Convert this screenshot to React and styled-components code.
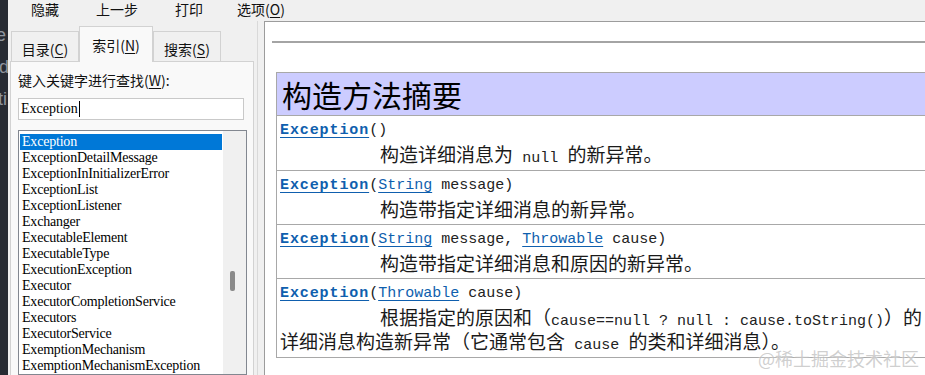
import React from "react";
import styled, { createGlobalStyle } from "styled-components";

const UI = `"Noto Sans CJK SC", "Noto Sans", sans-serif`;
const MONO = `"Liberation Mono", "DejaVu Sans Mono", monospace`;
const LIST = `"Liberation Serif", "Times New Roman", serif`;

const GlobalStyle = createGlobalStyle`
  html, body {
    margin: 0;
    padding: 0;
    overflow: hidden;
  }
  body {
    width: 925px;
    height: 375px;
    background: #f0f0f0;
  }
  * {
    box-sizing: border-box;
  }
`;

const Screen = styled.div`
  position: relative;
  display: flex;
  width: 925px;
  height: 375px;
  overflow: hidden;
  background: #f0f0f0;
`;

const Desktop = styled.div`
  flex: none;
  width: 8px;
  overflow: hidden;
  display: flex;
  flex-direction: column;
  gap: 12px;
  padding-top: 25px;
  background: #272b33;
  color: #8f959e;
  font: 18px "Liberation Sans", sans-serif;
`;

const Peek = styled.span`
  margin-left: ${(p) => p.$shift || -6}px;
  line-height: 20px;
  white-space: nowrap;
`;

const Window = styled.div`
  flex: 1;
  min-width: 0;
  display: flex;
  flex-direction: column;
`;

const Toolbar = styled.div`
  flex: none;
  height: 21px;
  display: flex;
  padding-left: 1px;
  font: 14px ${UI};
  color: #111;
`;

const ToolButton = styled.div`
  width: 72px;
  text-align: center;
  line-height: 18px;
`;

const Key = styled.span`
  text-decoration: underline;
  text-underline-offset: 2px;
`;

const Body = styled.div`
  flex: 1;
  min-height: 0;
  display: flex;
`;

const LeftPane = styled.div`
  flex: none;
  width: 250px;
  display: flex;
  flex-direction: column;
  padding: 6px 0 0 2px;
  border-right: 1px solid #d9d9d9;
`;

const TabRow = styled.div`
  flex: none;
  height: 35px;
  display: flex;
  align-items: flex-end;
  padding-left: 1px;
  margin-bottom: -1px;
  position: relative;
  z-index: 1;
`;

const Tab = styled.div`
  width: ${(p) => p.$w}px;
  height: ${(p) => (p.$active ? 36 : 31)}px;
  padding-top: ${(p) => (p.$active ? 7 : 6)}px;
  border: 1px solid #d2d2d2;
  border-bottom: ${(p) => (p.$active ? "none" : "1px solid #d2d2d2")};
  background: ${(p) => (p.$active ? "#f9f9f9" : "#f0f0f0")};
  font: 14px ${UI};
  line-height: 22px;
  text-align: center;
  color: #111;
`;

const TabPanel = styled.div`
  flex: 1;
  width: 244px;
  min-height: 0;
  display: flex;
  flex-direction: column;
  padding: 8px 6px 0 7px;
  border: 1px solid #d2d2d2;
  border-bottom: none;
  background: #f9f9f9;
`;

const Label = styled.div`
  font: 14px ${UI};
  line-height: 20px;
  color: #111;
`;

const SearchBox = styled.div`
  width: 226px;
  height: 22px;
  margin-top: 8px;
  padding-left: 2px;
  display: flex;
  align-items: center;
  background: #fff;
  border: 1px solid #c9c9c9;
  font: 14px ${LIST};
  color: #000;
`;

const Caret = styled.span`
  width: 1px;
  height: 16px;
  margin-left: 1px;
  background: #000;
`;

const ListBox = styled.div`
  flex: 1;
  min-height: 0;
  width: 229px;
  margin-top: 10px;
  display: flex;
  border: 1px solid #828790;
  background: #fff;
  overflow: hidden;
`;

const Items = styled.div`
  flex: 1;
  padding: 3px 1px 0 1px;
`;

const Item = styled.div`
  height: 16px;
  line-height: 16px;
  padding-left: 2px;
  font: 14px ${LIST};
  letter-spacing: -0.2px;
  white-space: nowrap;
  color: ${(p) => (p.$selected ? "#fff" : "#000")};
  background: ${(p) => (p.$selected ? "#0078d7" : "transparent")};
`;

const ScrollTrack = styled.div`
  flex: none;
  width: 23px;
  background: #f0f0f0;
  padding: 140px 0 0 7px;
`;

const Thumb = styled.div`
  width: 5px;
  height: 20px;
  border-radius: 2px;
  background: #8a8a8a;
`;

const Splitter = styled.div`
  flex: none;
  width: 6px;
`;

const DocPane = styled.div`
  flex: 1;
  min-width: 0;
  overflow: hidden;
  background: #fff;
  border-top: 1px solid #9c9c9c;
  border-left: 1px solid #9c9c9c;
  padding: 19px 0 0 7px;
`;

const Rule = styled.div`
  height: 2px;
  background: #a4a4a4;
`;

const Summary = styled.div`
  width: 700px;
  margin: 29px 0 0 4px;
  border-left: 1px solid #a8a8a8;
  border-right: 1px solid #a8a8a8;
`;

const Heading = styled.div`
  padding: 3px 5px;
  border-top: 1px solid #a8a8a8;
  border-bottom: 1px solid #a8a8a8;
  background: #ccccff;
  font: 30px ${UI};
  line-height: 36px;
  color: #000;
`;

const Row = styled.div`
  padding: 3px 0 4px 3px;
  border-bottom: 1px solid #a8a8a8;
  line-height: 23px;
`;

const Signature = styled.div`
  height: 23px;
  font: 15px ${MONO};
  line-height: 23px;
  color: #222;
  white-space: nowrap;
`;

const Link = styled.a`
  color: #0f5fae;
  font-weight: ${(p) => (p.$bold ? 700 : 400)};
  letter-spacing: ${(p) => (p.$bold ? "0.9px" : "0")};
  text-decoration: underline;
  text-underline-offset: 3px;
`;

const Desc = styled.div`
  font: 19px ${UI};
  line-height: 23px;
  color: #1a1a1a;
  text-indent: ${(p) => (p.$flush ? 0 : 100)}px;
  word-spacing: 5px;
  white-space: nowrap;
`;

const Code = styled.span`
  font: 15px ${MONO};
  line-height: 1;
  word-spacing: 0;
  color: #222;
`;

const Watermark = styled.div`
  position: absolute;
  right: 6px;
  bottom: 7px;
  font: 18px ${UI};
  line-height: 20px;
  color: rgba(160, 160, 160, 0.5);
  text-shadow: 0 0 2px #fff;
`;

const entries = [
  "Exception",
  "ExceptionDetailMessage",
  "ExceptionInInitializerError",
  "ExceptionList",
  "ExceptionListener",
  "Exchanger",
  "ExecutableElement",
  "ExecutableType",
  "ExecutionException",
  "Executor",
  "ExecutorCompletionService",
  "Executors",
  "ExecutorService",
  "ExemptionMechanism",
  "ExemptionMechanismException",
  "ExemptionMechanismSpi",
];

export default function App() {
  return (
    <>
      <GlobalStyle />
      <Screen>
        <Desktop>
          <Peek $shift={-4}>e</Peek>
          <Peek $shift={-1}>de</Peek>
          <Peek $shift={-2}>ti</Peek>
        </Desktop>
        <Window>
          <Toolbar>
            <ToolButton>隐藏</ToolButton>
            <ToolButton>上一步</ToolButton>
            <ToolButton>打印</ToolButton>
            <ToolButton>
              选项(<Key>O</Key>)
            </ToolButton>
          </Toolbar>
          <Body>
            <LeftPane>
              <TabRow>
                <Tab $w={68}>
                  目录(<Key>C</Key>)
                </Tab>
                <Tab $w={74} $active>
                  索引(<Key>N</Key>)
                </Tab>
                <Tab $w={68}>
                  搜索(<Key>S</Key>)
                </Tab>
              </TabRow>
              <TabPanel>
                <Label>
                  键入关键字进行查找(<Key>W</Key>):
                </Label>
                <SearchBox>
                  Exception
                  <Caret />
                </SearchBox>
                <ListBox>
                  <Items>
                    {entries.map((name, i) => (
                      <Item key={name} $selected={i === 0}>
                        {name}
                      </Item>
                    ))}
                  </Items>
                  <ScrollTrack>
                    <Thumb />
                  </ScrollTrack>
                </ListBox>
              </TabPanel>
            </LeftPane>
            <Splitter />
            <DocPane>
              <Rule />
              <Summary>
                <Heading>构造方法摘要</Heading>
                <Row>
                  <Signature>
                    <Link $bold>Exception</Link>()
                  </Signature>
                  <Desc>
                    构造详细消息为 <Code>null</Code> 的新异常。
                  </Desc>
                </Row>
                <Row>
                  <Signature>
                    <Link $bold>Exception</Link>(<Link>String</Link> message)
                  </Signature>
                  <Desc>构造带指定详细消息的新异常。</Desc>
                </Row>
                <Row>
                  <Signature>
                    <Link $bold>Exception</Link>(<Link>String</Link> message,{" "}
                    <Link>Throwable</Link> cause)
                  </Signature>
                  <Desc>构造带指定详细消息和原因的新异常。</Desc>
                </Row>
                <Row>
                  <Signature>
                    <Link $bold>Exception</Link>(<Link>Throwable</Link> cause)
                  </Signature>
                  <Desc>
                    根据指定的原因和（
                    <Code>cause==null ? null : cause.toString()</Code>）的
                  </Desc>
                  <Desc $flush>
                    详细消息构造新异常（它通常包含 <Code>cause</Code> 的类和详细消息）。
                  </Desc>
                </Row>
              </Summary>
            </DocPane>
          </Body>
        </Window>
        <Watermark>@稀土掘金技术社区</Watermark>
      </Screen>
    </>
  );
}
